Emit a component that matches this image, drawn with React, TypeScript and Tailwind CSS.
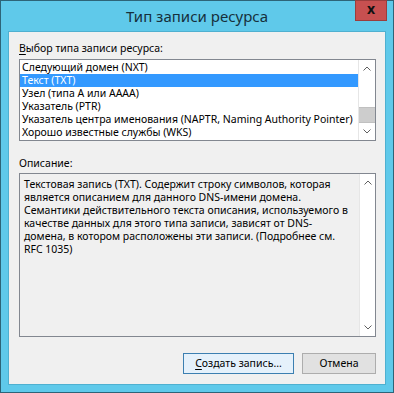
import React from 'react';

const FONT = '"Segoe UI", "Noto Sans", "Liberation Sans", sans-serif';

const records = [
  'Следующий домен (NXT)',
  'Текст (TXT)',
  'Узел (типа A или AAAA)',
  'Указатель (PTR)',
  'Указатель центра именования (NAPTR, Naming Authority Pointer)',
  'Хорошо известные службы (WKS)',
];

const description = [
  'Текстовая запись (TXT). Содержит строку символов, которая',
  'является описанием для данного DNS-имени домена.',
  'Семантики действительного текста описания, используемого в',
  'качестве данных для этого типа записи, зависят от DNS-',
  'домена, в котором расположены эти записи. (Подробнее см.',
  'RFC 1035)',
];

function Chevron({ up }: { up?: boolean }) {
  return (
    <svg width="8" height="5" viewBox="0 0 8 5" className="block">
      <path
        d={up ? 'M0.5 4.5 L4 1 L7.5 4.5' : 'M0.5 0.5 L4 4 L7.5 0.5'}
        fill="none"
        stroke="#606060"
        strokeWidth="1"
      />
    </svg>
  );
}

function ArrowBox({ up }: { up?: boolean }) {
  return (
    <div className="h-[17px] shrink-0 flex items-center justify-center">
      <Chevron up={up} />
    </div>
  );
}

export default function App() {
  return (
    <div
      className="w-[394px] h-[393px] bg-[#5fc9ea] border border-[#2d6478] flex flex-col text-[10.5px] text-black"
      style={{ fontFamily: FONT }}
    >
      {/* Title bar */}
      <div className="relative h-[30px] flex items-center justify-center">
        <span className="text-[15px] text-[#16303c] leading-none pt-[1px]">Тип записи ресурса</span>
        <div className="absolute right-[6px] top-[-1px] w-[32px] h-[21px] bg-[#c75050] border border-[#9b3d3d] flex items-center justify-center">
          <span className="text-[14px] font-bold leading-none text-[#111] pb-[3px]">x</span>
        </div>
      </div>

      {/* Client area */}
      <div className="flex-1 mx-[7px] mb-[7px] bg-[#f0f0f0] border border-[#4fb0d0] flex flex-col pl-[10px] pr-[9px] pt-[9px]">
        <div className="leading-[15px]">
          <span className="underline underline-offset-2">В</span>ыбор типа записи ресурса:
        </div>

        {/* List box */}
        <div className="mt-[3px] h-[82px] border border-[#828790] bg-white flex">
          <div className="flex-1 min-w-0 overflow-hidden pt-[1px]">
            {records.map((r, i) => (
              <div
                key={r}
                className={`h-[13px] leading-[13px] px-[2px] whitespace-nowrap ${
                  i === 1 ? 'bg-[#3399ff] text-white' : ''
                }`}
              >
                {r}
              </div>
            ))}
          </div>
          <div className="w-[17px] shrink-0 flex flex-col bg-white border-l border-[#e6e6e6]">
            <ArrowBox up />
            <div className="flex-1 flex flex-col justify-end">
              <div className="h-[16px] bg-[#cdcdcd] border-y border-[#c0c0c0]" />
            </div>
            <ArrowBox />
          </div>
        </div>

        <div className="mt-[15px] leading-[15px]">Описание:</div>

        {/* Description */}
        <div className="mt-[2px] h-[164px] border border-[#828790] bg-[#f0f0f0] flex">
          <div className="flex-1 min-w-0 overflow-hidden pt-[4px] pl-[4px]">
            {description.map((l) => (
              <div key={l} className="h-[13px] leading-[13px] whitespace-nowrap">
                {l}
              </div>
            ))}
          </div>
          <div className="w-[16px] shrink-0 flex flex-col justify-between bg-white border-l border-[#e6e6e6]">
            <ArrowBox up />
            <ArrowBox />
          </div>
        </div>

        {/* Buttons */}
        <div className="mt-[16px] flex justify-end gap-[8px]">
          <div className="w-[111px] h-[21px] bg-[#e5f1fb] border border-[#3c7fb1] flex items-center justify-center">
            <span>
              <span className="underline underline-offset-2">С</span>оздать запись...
            </span>
          </div>
          <div className="w-[74px] h-[21px] bg-[#e1e1e1] border border-[#adadad] flex items-center justify-center">
            Отмена
          </div>
        </div>
      </div>
    </div>
  );
}
